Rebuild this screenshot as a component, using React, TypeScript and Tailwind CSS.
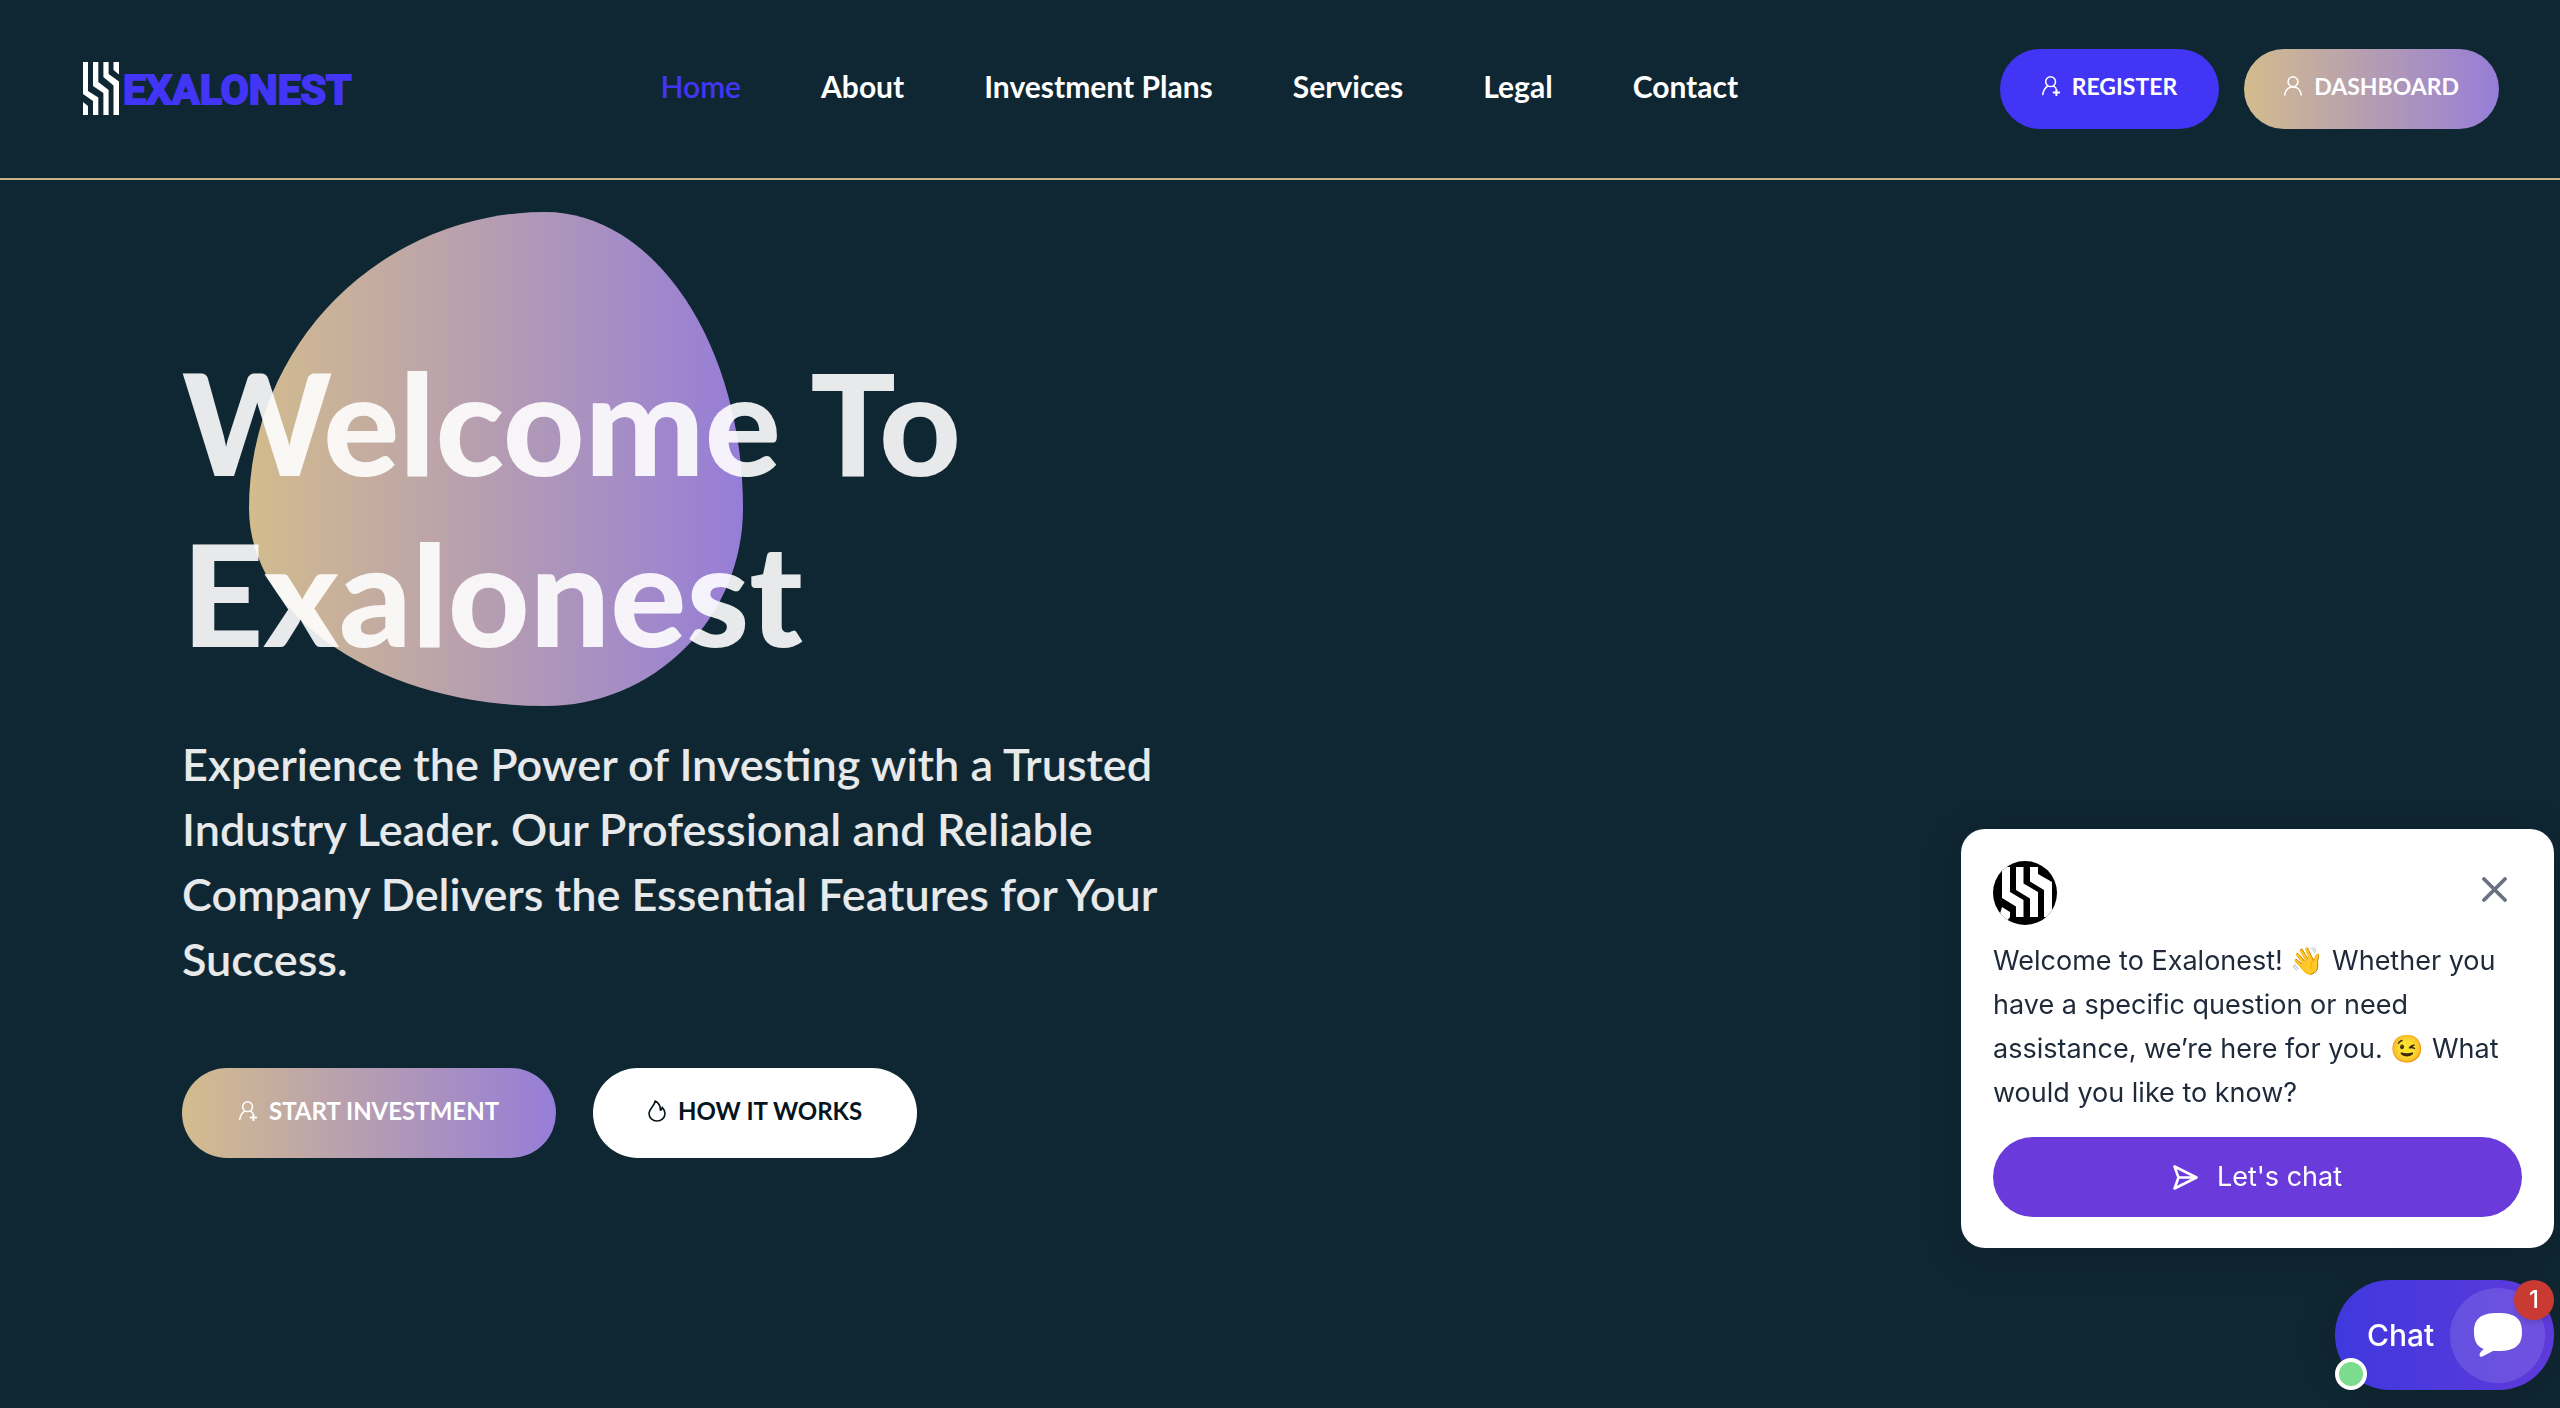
import { clsx } from "clsx";

const navItems = [
  { href: "#home", label: "Home" },
  { href: "#about", label: "About" },
  { href: "#plans", label: "Investment Plans" },
  { href: "#services", label: "Services" },
  { href: "#legal", label: "Legal" },
  { href: "#contact", label: "Contact" },
];

function UserIcon() {
  return (
    <svg viewBox="0 0 18 20" className="h-5 w-[18px] shrink-0" fill="none" stroke="currentColor" strokeWidth="1.5" strokeLinecap="round">
      <circle cx="9" cy="5.7" r="4.9" />
      <path d="M0.8 19C1.4 14 4.6 10.9 9 10.9S16.6 14 17.2 19" />
    </svg>
  );
}

function UserPlusIcon() {
  return (
    <svg viewBox="0 0 18 20" className="h-5 w-[18px] shrink-0" fill="none" stroke="currentColor" strokeWidth="1.5" strokeLinecap="round">
      <circle cx="8.6" cy="5.7" r="4.9" />
      <path d="M0.8 18.6C1.3 14.6 3.1 11.8 5.7 10.2M11.6 10.2C12.5 10.7 13.3 11.4 13.9 12.2" />
      <path d="M14.4 13.7V19.3M11.6 16.5H17.2" strokeWidth="2" />
    </svg>
  );
}

function FlameIcon() {
  return (
    <svg viewBox="0 0 18 22" className="h-[22px] w-[18px] shrink-0" fill="none" stroke="currentColor" strokeWidth="1.6" strokeLinejoin="round">
      <path d="M7 1C7.4 5 1 8.4 1 13.6C1 18 4.6 21 9 21S17 18 17 13.6C17 11 16 9 14.2 7.2C14.3 8.8 13.6 9.9 12.4 10.3C12.5 6 10.6 2.6 7 1Z" />
    </svg>
  );
}

function SendIcon() {
  return (
    <svg viewBox="0 0 25 25" className="size-[25px] shrink-0" fill="none" stroke="currentColor" strokeWidth="2.6" strokeLinecap="round" strokeLinejoin="round">
      <path d="M1.5 1.5L23.5 12.5L1.5 23.5L5.5 12.5ZM5.5 12.5H23" />
    </svg>
  );
}

function Logo() {
  return (
    <a href="#home" className="flex w-[316px] items-center gap-1 pb-0.5">
      <svg viewBox="0 0 36 53" className="h-[53px] w-9 shrink-0" fill="#fff">
        <path d="M0 0H5V29L15.3 35.5V53H10V39L0 32Z" />
        <path d="M10 0H15.3V20L25.6 28V53H20.4V31L10 24Z" />
        <path d="M20.4 0H25.6V12L36 19.5V53H30.5V23.5L20.4 15Z" />
        <path d="M30.5 0H36V12.5L30.5 8ZM0 40L5 44V53H0Z" />
      </svg>
      <span className="pt-1 font-['Roboto',sans-serif] text-[41px] leading-[53px] font-bold text-[#4335f5] [-webkit-text-stroke:2px_#4335f5] [stroke-linejoin:round]">
        EXALONEST
      </span>
    </a>
  );
}

function Header() {
  return (
    <header className="flex h-[180px] items-center justify-between border-b-2 border-[#c9b28a] pr-[61px] pl-[83px]">
      <Logo />
      <nav className="flex gap-20 pb-1.5">
        {navItems.map((item, i) => (
          <a
            key={item.href}
            href={item.href}
            className={clsx(
              "text-[30px] leading-9",
              i === 0 ? "font-semibold text-[#4335f5]" : "font-bold text-white",
            )}
          >
            {item.label}
          </a>
        ))}
      </nav>
      <div className="flex gap-[25px] text-[23px] font-bold text-white">
        <button className="flex h-20 items-center gap-3 rounded-full bg-[#4335f5] px-[42px] pb-1.5">
          <UserPlusIcon />
          REGISTER
        </button>
        <button className="flex h-20 items-center gap-3 rounded-full bg-linear-to-r/srgb from-[#d3bc8d] to-[#967dd8] px-10 pb-1.5">
          <UserIcon />
          DASHBOARD
        </button>
      </div>
    </header>
  );
}

function Hero() {
  return (
    <main className="relative px-[182px] pt-[156px]">
      <div className="absolute top-8 left-[249px] size-[494px] rounded-[60%_40%_40%_60%/60%_60%_40%_40%] bg-linear-to-r/srgb from-[#d3bc8d] to-[#967dd8]" />
      <div className="relative max-w-[1040px]">
        <h1 className="text-[142px] leading-[171px] font-black text-white/90">
          Welcome To
          <br />
          Exalonest
        </h1>
        <p className="mt-[54px] text-[45px] leading-[65px] font-semibold text-white/90">
          Experience the Power of Investing with a Trusted Industry Leader. Our
          Professional and Reliable Company Delivers the Essential Features for
          Your Success.
        </p>
        <div className="mt-[76px] flex gap-[37px] text-2xl font-bold">
          <button className="flex h-[90px] items-center gap-3 rounded-full bg-linear-to-r/srgb from-[#d3bc8d] to-[#967dd8] px-[57px] pb-1 text-white">
            <UserPlusIcon />
            START INVESTMENT
          </button>
          <button className="flex h-[90px] items-center gap-3 rounded-full bg-white px-[55px] pb-1 text-[#06151d]">
            <FlameIcon />
            HOW IT WORKS
          </button>
        </div>
      </div>
    </main>
  );
}

function ChatWidget() {
  return (
    <aside className="fixed right-1.5 bottom-[18px] flex flex-col items-end gap-8 font-['Inter',sans-serif]">
      <section className="w-[593px] rounded-3xl bg-white px-8 pt-8 pb-[31px] shadow-[0_8px_40px_rgba(0,0,0,0.18)]">
        <div className="flex items-start justify-between">
          <svg viewBox="0 0 64 64" className="size-16 rounded-full bg-black" fill="#fff">
            <path d="M9 6H17V31L30.5 39V56H23V45.6L9 37Z" />
            <path d="M23 6H30.5V22.5L45 31V56H37V37.5L23 29Z" />
            <path d="M37 6H45V13L59 21V56H51V29L37 20.5Z" />
            <path d="M59 14L64 17V6H59ZM9 46L17 51V56L14 60L6 56Z" />
          </svg>
          <button aria-label="Close" className="flex size-14 items-center justify-center text-gray-500">
            <svg viewBox="0 0 25 25" className="size-[25px]" fill="none" stroke="currentColor" strokeWidth="3.8" strokeLinecap="round">
              <path d="M2 2L23 23M23 2L2 23" />
            </svg>
          </button>
        </div>
        <p className="mt-3.5 text-[27px] leading-[44px] text-gray-800">
          Welcome to Exalonest! 👋 Whether you have a specific question or need
          assistance, we’re here for you. 😉 What would you like to know?
        </p>
        <button className="mt-[22px] flex h-20 w-full items-center justify-center gap-[19px] rounded-full bg-[#6a3adb] text-[27px] text-white">
          <SendIcon />
          Let's chat
        </button>
      </section>
      <button className="relative flex h-[110px] w-[219px] items-center justify-between rounded-full bg-linear-to-r/srgb from-[#3f38dd] to-[#5f3adb] pr-[9px] pl-8 text-[30px] font-medium text-white shadow-[0_4px_40px_rgba(0,0,0,0.15)]">
        Chat
        <span className="flex size-[95px] items-center justify-center rounded-full bg-white/12">
          <svg viewBox="0 0 48 44" className="h-11 w-12" fill="#fff">
            <path d="M24 0C41 0 48 5.5 48 19S41 38 24 38C22.5 38 21 38 19.5 37.8C15.5 40 11.5 41.8 8.3 43.5C6.4 44.4 5 43 5.7 41C6.3 39.2 7.5 37.5 9.8 36C3 33.4 0 28.5 0 19C0 5.5 7 0 24 0Z" />
          </svg>
        </span>
        <span className="absolute top-0 right-0 flex size-10 items-center justify-center rounded-full bg-[#c93a32] text-2xl shadow-md">
          1
        </span>
        <span className="absolute bottom-0 left-0 size-8 rounded-full border-4 border-white bg-[#7adc8c]" />
      </button>
    </aside>
  );
}

export default function App() {
  return (
    <div className="min-h-screen bg-[#0f2733] font-['Lato',sans-serif]">
      <Header />
      <Hero />
      <ChatWidget />
    </div>
  );
}
